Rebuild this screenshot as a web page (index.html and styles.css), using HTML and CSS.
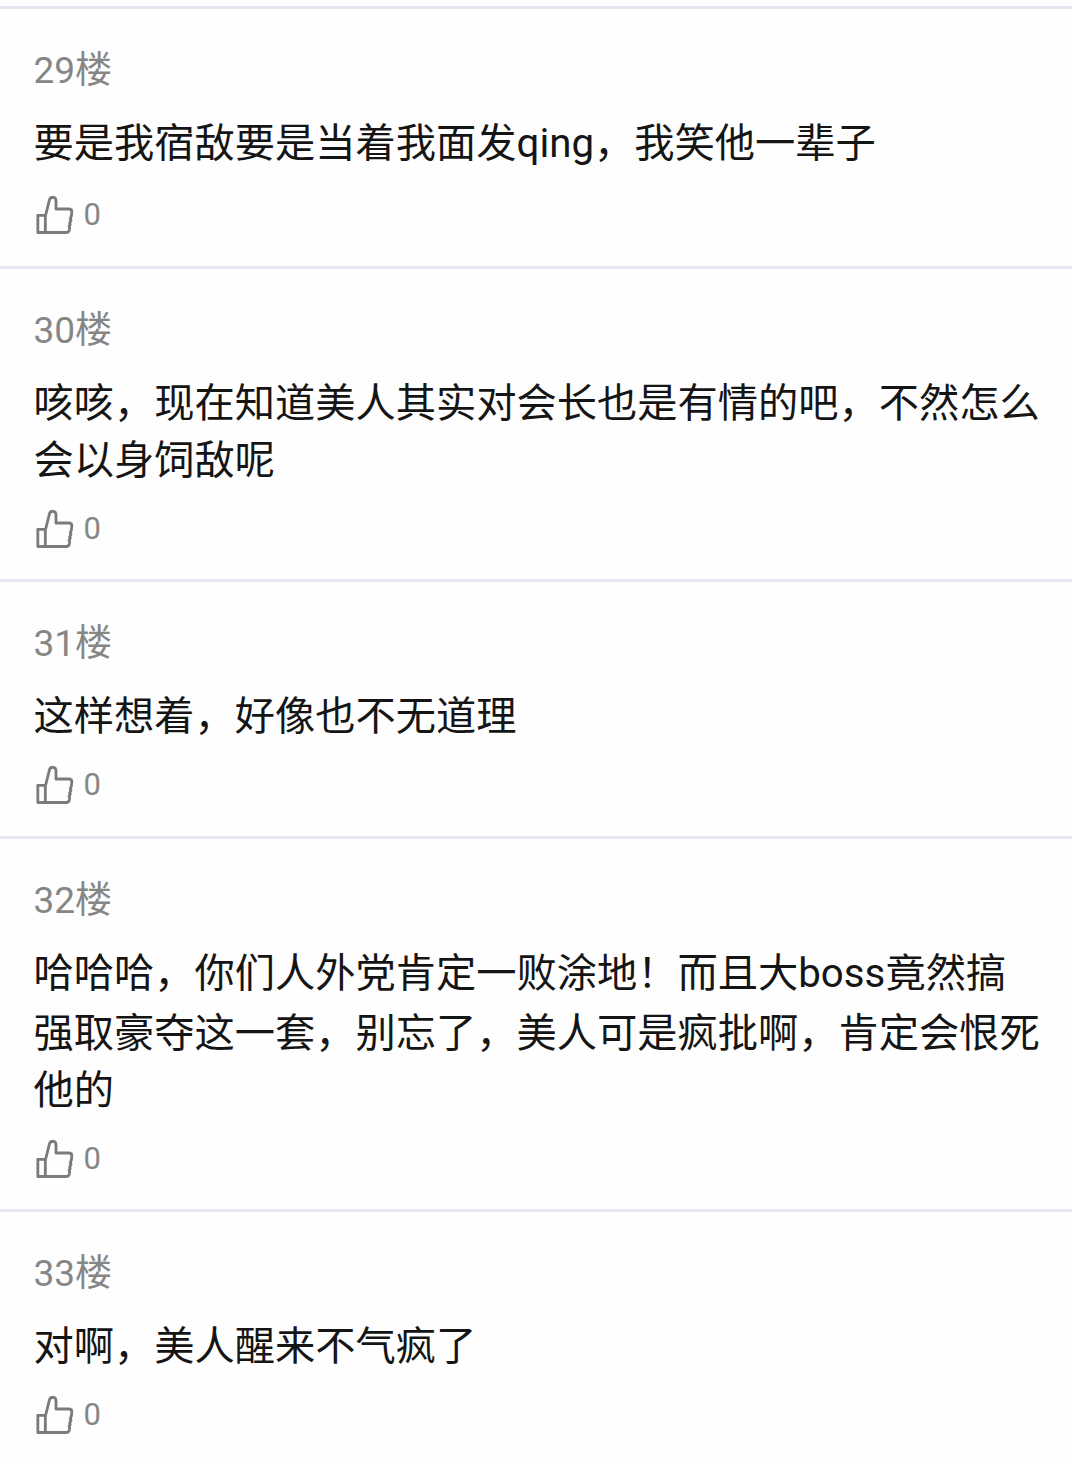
FILE: index.html
```html
<!DOCTYPE html>
<html lang="zh-CN">
<head>
    <meta charset="UTF-8">
    <meta name="viewport" content="width=device-width, initial-scale=1.0">
    <title>评论</title>
    <link rel="stylesheet" href="styles.css">
</head>
<body>
    <!-- Shared like icon -->
    <svg class="sprite" width="0" height="0">
        <symbol id="thumb" viewBox="48 45 114 120">
            <path d="M76 157V106H53.500V157.500H139Q146.500 157.500 148 150L149 143L147 139L151 133L149 129L153 121L151 117L154 108L155.500 97Q156 87.500 148 87H108V63C108 48 91 49 88 61L77 105"/>
        </symbol>
    </svg>

    <div class="comments">
        <div class="comment">
            <div class="floor">29楼</div>
            <div class="text">要是我宿敌要是当着我面发<span class="latin">qing</span>，我笑他一辈子</div>
            <div class="like"><svg class="icon"><use href="#thumb"/></svg><span>0</span></div>
        </div>

        <div class="comment">
            <div class="floor">30楼</div>
            <div class="text">咳咳，现在知道美人其实对会长也是有情的吧，不然怎么会以身饲敌呢</div>
            <div class="like"><svg class="icon"><use href="#thumb"/></svg><span>0</span></div>
        </div>

        <div class="comment">
            <div class="floor">31楼</div>
            <div class="text">这样想着，好像也不无道理</div>
            <div class="like"><svg class="icon"><use href="#thumb"/></svg><span>0</span></div>
        </div>

        <div class="comment">
            <div class="floor">32楼</div>
            <div class="text">哈哈哈，你们人外党肯定一败涂地！而且大<span class="latin">boss</span>竟然搞强取豪夺这一套，别忘了，美人可是疯批啊，肯定会恨死他的</div>
            <div class="like"><svg class="icon"><use href="#thumb"/></svg><span>0</span></div>
        </div>

        <div class="comment">
            <div class="floor">33楼</div>
            <div class="text">对啊，美人醒来不气疯了</div>
            <div class="like"><svg class="icon"><use href="#thumb"/></svg><span>0</span></div>
        </div>
    </div>
</body>
</html>
```
FILE: styles.css
```css
body {
    margin: 0;
    padding-top: 6px;
    background-color: #fefefe;
    font-family: Roboto, "Noto Sans CJK SC", sans-serif;
}
.sprite {
    position: absolute;
}
.comment {
    padding: 35px 30px 30.5px 33.5px;
    border-top: 3px solid #e4e5ee;
}
.floor {
    height: 52px;
    margin-bottom: 19px;
    font-size: 37px;
    line-height: 54px;
    color: #868686;
}
.text {
    font-size: 40.25px;
    line-height: 57px;
    color: #151515;
}
/* latin words make their line a little taller */
.latin {
    display: inline-block;
    padding-bottom: 3px;
}
.like {
    display: flex;
    align-items: center;
    height: 40px;
    margin-top: 20px;
    padding-left: 2px;
    font-size: 31px;
    line-height: 36px;
    color: #868686;
}
.icon {
    width: 38px;
    height: 40px;
    margin-right: 10px;
    fill: none;
    stroke: #7b7b7b;
    stroke-width: 8.5;
    stroke-linejoin: round;
}
```
